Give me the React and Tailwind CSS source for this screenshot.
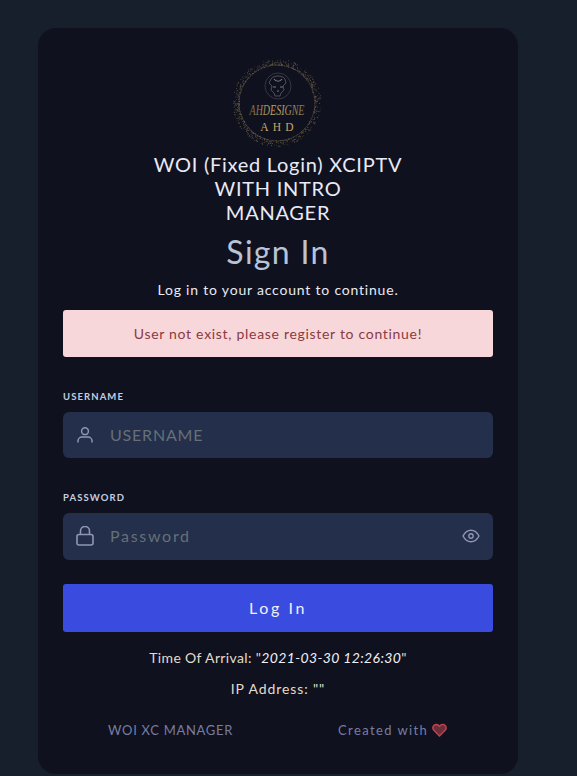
import React from "react";

const font = { fontFamily: "Lato, 'Noto Sans', sans-serif" };

function rnd(n) {
  const x = Math.sin(n * 12.9898) * 43758.5453;
  return x - Math.floor(x);
}

function Logo() {
  const dots = [];
  for (let i = 0; i < 700; i++) {
    const a = rnd(i + 1) * Math.PI * 2;
    const r = 37.5 + Math.pow(rnd(i + 500), 1.6) * 6.5;
    dots.push(
      <circle key={i} cx={44 + Math.cos(a) * r} cy={46 + Math.sin(a) * r} r="0.4" fill={i % 3 ? "#8f7f58" : "#5f5640"} />
    );
  }
  return (
    <svg width="90" height="90" viewBox="0 0 90 90">
      <defs>
        <linearGradient id="gold" x1="0" y1="0" x2="1" y2="0">
          <stop offset="0" stopColor="#6f6243" />
          <stop offset="0.5" stopColor="#c9a865" />
          <stop offset="1" stopColor="#7d6f4c" />
        </linearGradient>
      </defs>
      {dots}
      <circle cx="44" cy="46" r="38" fill="none" stroke="#5a5140" strokeWidth="0.5" />
      <circle cx="45" cy="29" r="13" fill="none" stroke="#45454f" strokeWidth="0.7" />
      <path d="M38 22c3-4 11-4 14 0l1 4-3 3 1 4-3 3-1 3h-5l-1-3-3-3 1-4-3-3z" fill="none" stroke="#5e5e68" strokeWidth="0.8" />
      <path d="M41 22c2 3 6 3 8 0M40 30h3M47 30h3M44 34h2" stroke="#7b7b84" strokeWidth="1.1" fill="none" />
      <text x="44" y="40" transform="scale(1 1.45)" textAnchor="middle" fill="url(#gold)" fontSize="10" fontStyle="italic" fontFamily="'Liberation Serif', serif">AHDESIGNE</text>
      <text x="46" y="74" textAnchor="middle" fill="#c9a865" fontSize="11.500" fontFamily="'Liberation Serif', serif" letterSpacing="4.2">AHD</text>
    </svg>
  );
}

function Field({ label, icon, placeholder, right, box, spacing }) {
  return (
    <div className="mt-[34px]">
      <label className="block text-[9.5px] font-bold tracking-[1.1px] text-[#c3cfe2] leading-[12px] mb-[9px]">{label}</label>
      <div className={`flex items-center ${box} rounded-[6px] bg-[#232f4b] pl-[12px] pr-[12px]`}>
        <span className="w-[20px] flex justify-center shrink-0">{icon}</span>
        <input
          type="text"
          placeholder={placeholder}
          className={`ml-[15px] flex-1 min-w-0 bg-transparent outline-none text-[16px] ${spacing} placeholder:text-[#667076]`}
          style={font}
        />
        {right}
      </div>
    </div>
  );
}

export default function App() {
  return (
    <div className="min-h-[776px] bg-[#171f2c] pt-[28px] pl-[38px] overflow-hidden" style={font}>
      <div className="w-[480px] h-[746px] rounded-[18px] bg-[#10111e] px-[25px] pt-[29px] flex flex-col text-center">
        <div className="flex justify-center h-[90px]"><Logo /></div>
        <h1 className="mt-[5px] text-[20px] leading-[24px] font-normal text-[#e8eaf6] tracking-[0.72px] w-[300px] mx-auto">
          WOI (Fixed Login) XCIPTV<br />WITH INTRO<br />MANAGER
        </h1>
        <h2 className="mt-[8px] text-[32px] leading-[40px] font-normal text-[#b9c2d6] tracking-[1.3px]">Sign In</h2>
        <p className="mt-[8px] text-[14px] leading-[20px] text-[#e8eaf6] tracking-[0.8px]">Log in to your account to continue.</p>
        <div className="mt-[10px] h-[47px] flex items-center justify-center rounded-[3px] bg-[#f8d7da] text-[14px] text-[#8a3a42] tracking-[0.7px]">
          User not exist, please register to continue!
        </div>
        <div className="text-left">
          <Field
            label="USERNAME"
            placeholder="USERNAME"
            box="h-[46px]"
            spacing="tracking-[0.8px]"
            icon={
              <svg width="18" height="18" viewBox="0 0 18 18" fill="none" stroke="#8e97b5" strokeWidth="1.5">
                <circle cx="9" cy="5.200" r="3.400" />
                <path d="M2 16.500v-1.500a4 4 0 0 1 4-4h6a4 4 0 0 1 4 4v1.500" />
              </svg>
            }
          />
          <Field
            label="PASSWORD"
            placeholder="Password"
            box="h-[47px] pb-[2px]"
            spacing="tracking-[1.7px]"
            icon={
              <svg width="18" height="20" viewBox="0 0 18 20" fill="none" stroke="#8e97b5" strokeWidth="1.6">
                <rect x="1" y="8.500" width="16" height="10.500" rx="2" />
                <path d="M4.500 8.500V5a4.500 4.500 0 0 1 9 0v3.500" />
              </svg>
            }
            right={
              <svg width="18" height="14" viewBox="0 0 18 14" fill="none" stroke="#8e97b5" strokeWidth="1.4" className="shrink-0 mr-[1px]">
                <path d="M1 7c2-3.800 4.800-5.800 8-5.800S15 3.200 17 7c-2 3.800-4.800 5.800-8 5.800S3 10.800 1 7z" />
                <circle cx="9" cy="7" r="2.200" />
              </svg>
            }
          />
        </div>
        <button className="mt-[24px] h-[48px] rounded-[3px] bg-[#3a4ce0] text-[#eef0fb] text-[16px] tracking-[2.6px]">Log In</button>
        <p className="mt-[16px] text-[14px] leading-[20px] text-[#e3dccb] tracking-[0.36px]">
          Time Of Arrival: "<em className="text-[#f0f0f4]">2021-03-30 12:26:30</em>"
        </p>
        <p className="mt-[11px] text-[14px] leading-[20px] text-[#e3dccb] tracking-[0.9px]">IP Address: ""</p>
        <div className="mt-[21px] flex text-[13px] leading-[20px] text-[#767da3] tracking-[0.7px]">
          <div className="w-[275px] pl-[45px] text-left">WOI XC MANAGER</div>
          <div className="flex items-center tracking-[1.4px]">
            Created with
            <svg width="15" height="14" viewBox="0 0 24 22" className="ml-[4px]" fill="#6b2f3c" stroke="#c2414f" strokeWidth="2.400">
              <path d="M12 20.500 3 11.500a5.500 5.500 0 0 1 7.800-7.800L12 5l1.200-1.300a5.500 5.500 0 0 1 7.800 7.800z" />
            </svg>
          </div>
        </div>
      </div>
    </div>
  );
}
